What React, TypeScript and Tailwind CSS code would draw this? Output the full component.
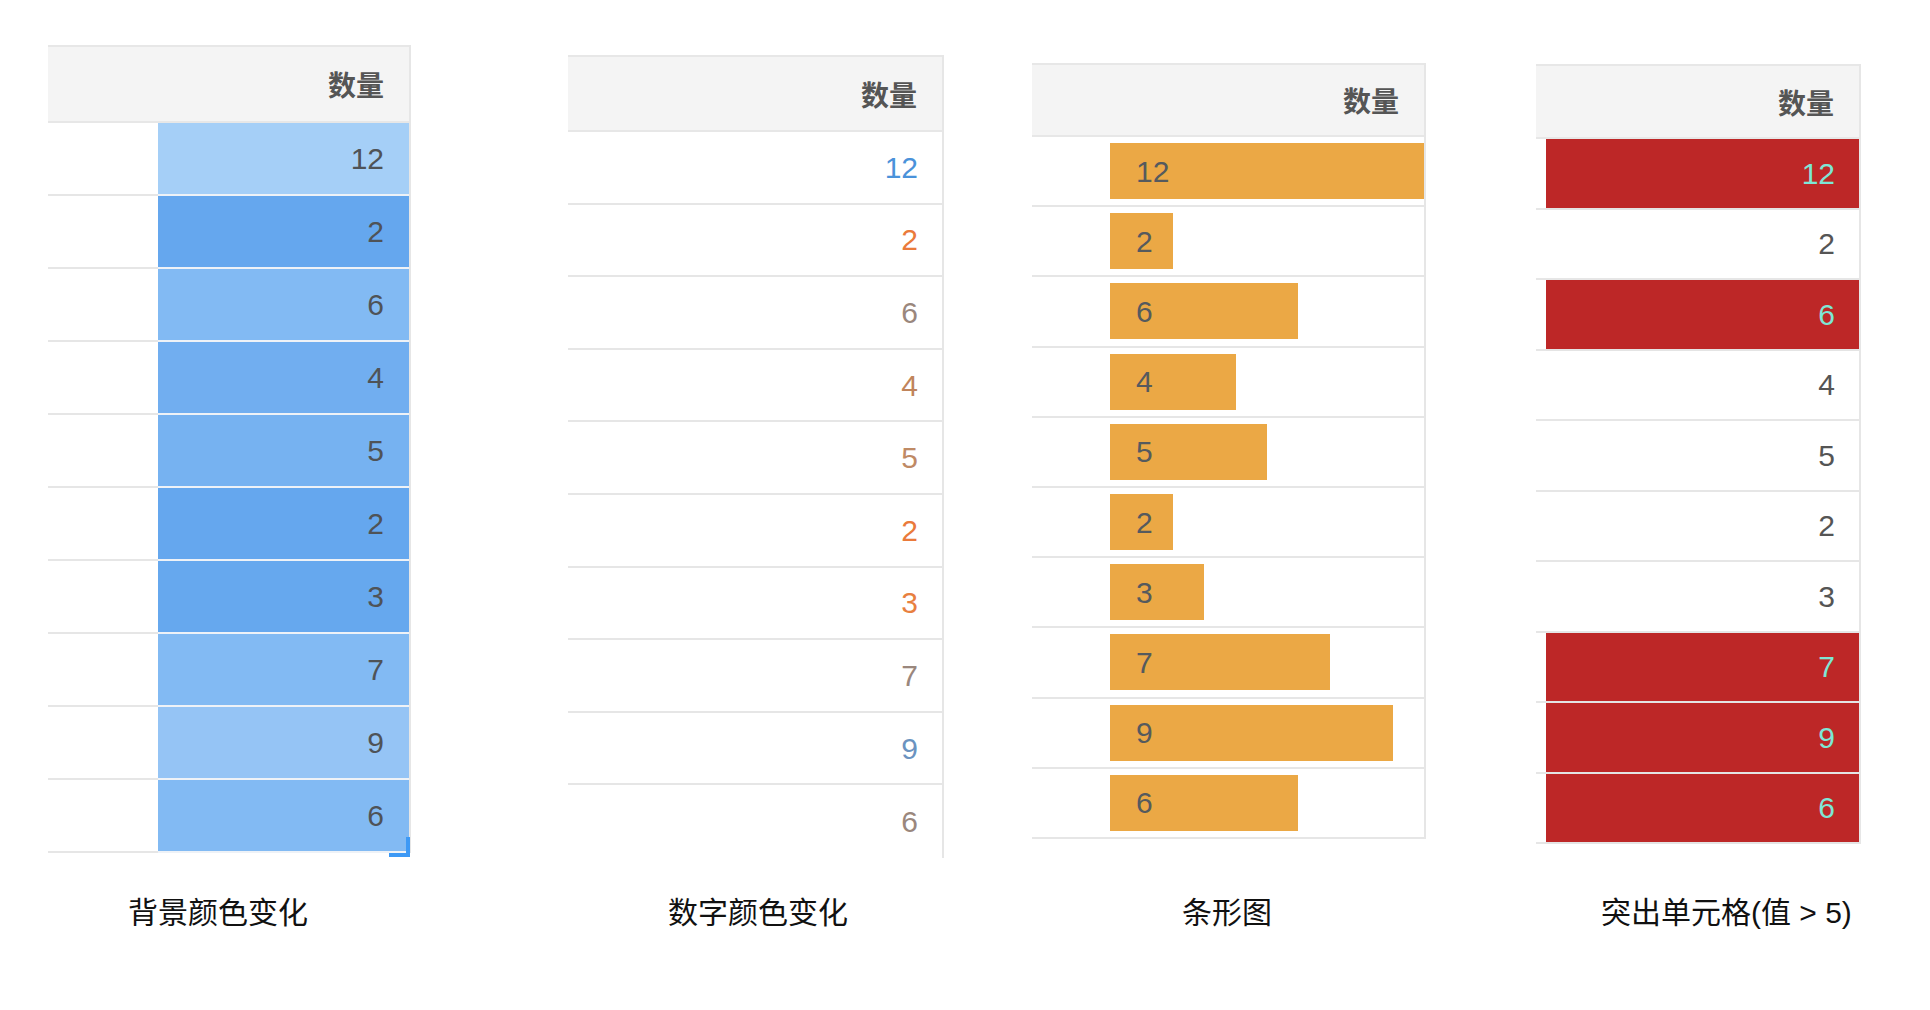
const values = [12, 2, 6, 4, 5, 2, 3, 7, 9, 6];

// colour scale for the first table (lower value = deeper blue)
const blueBg: Record<number, string> = {
  2: "bg-[#65a7ee]",
  3: "bg-[#66a8ee]",
  4: "bg-[#71aef0]",
  5: "bg-[#76b2f1]",
  6: "bg-[#82baf3]",
  7: "bg-[#82baf3]",
  9: "bg-[#95c4f5]",
  12: "bg-[#a5cff7]",
};

const textColors = [
  "text-[#4a92da]",
  "text-[#ea7a3b]",
  "text-[#9a877d]",
  "text-[#c0845b]",
  "text-[#bf8a65]",
  "text-[#ea7a3b]",
  "text-[#e8803f]",
  "text-[#9a877d]",
  "text-[#6b93c0]",
  "text-[#9a877d]",
];

const numFont = "font-['Liberation_Sans',Arial,sans-serif] text-[30px]";
const cjkFont = "font-['Noto_Sans_CJK_SC','Noto_Sans',sans-serif]";
const labelFont = "font-['Liberation_Sans','Noto_Sans_CJK_SC',sans-serif]";

function Header({ h }: { h: string }) {
  return (
    <div
      className={`${h} flex items-center justify-end pr-[25px] bg-[#f4f4f4] border-t-2 border-b-2 border-[#e7e7e7] ${cjkFont} font-bold text-[28px] text-[#555]`}
    >
      数量
    </div>
  );
}

function Label({ text, ml }: { text: string; ml: string }) {
  return (
    <div className={`${ml} h-[40px] leading-[40px] whitespace-nowrap ${labelFont} text-[30px] text-[#111]`}>
      {text}
    </div>
  );
}

function BackgroundTable() {
  return (
    <div className="relative w-[363px] border-r-2 border-[#e6e6e6]">
      <Header h="h-[78px]" />
      {values.map((v, i) => (
        <div key={i} className="flex h-[73px]">
          <div className="w-[110px] border-b-2 border-[#e6e6e6]" />
          <div
            className={`flex-1 flex items-center justify-end pr-[25px] border-b-2 border-[#eef2f7] ${blueBg[v]} ${numFont} text-[#4f5357]`}
          >
            {v}
          </div>
        </div>
      ))}
      <div className="absolute right-[-1px] bottom-[-4px] w-[4px] h-[20px] bg-[#3d99f5]" />
      <div className="absolute right-[-1px] bottom-[-4px] w-[21px] h-[4px] bg-[#3d99f5]" />
    </div>
  );
}

function TextColorTable() {
  return (
    <div className="w-[376px] border-r-2 border-[#e6e6e6]">
      <Header h="h-[77px]" />
      {values.map((v, i) => (
        <div
          key={i}
          className={`flex h-[72.6px] items-center justify-end pr-[24px] ${
            i < values.length - 1 ? "border-b-2 border-[#e6e6e6]" : ""
          } ${numFont} ${textColors[i]}`}
        >
          {v}
        </div>
      ))}
    </div>
  );
}

function BarTable() {
  return (
    <div className="w-[394px] border-r-2 border-[#e6e6e6]">
      <Header h="h-[74px]" />
      {values.map((v, i) => (
        <div key={i} className="flex h-[70.2px] items-center pl-[78px] border-b-2 border-[#e6e6e6] overflow-hidden">
          <div
            className={`h-[56px] shrink-0 flex items-center pl-[26px] bg-[#eba845] ${numFont} text-[#555a5e]`}
            style={{ width: Math.min(Math.round(v * 31.4), 314) }}
          >
            {v}
          </div>
        </div>
      ))}
    </div>
  );
}

function HighlightTable() {
  return (
    <div className="w-[325px] border-r-2 border-[#e6e6e6]">
      <Header h="h-[75px]" />
      {values.map((v, i) => (
        <div key={i} className="flex h-[70.5px]">
          <div className="w-[10px] border-b-2 border-[#e6e6e6]" />
          <div
            className={`flex-1 flex items-center justify-end pr-[24px] border-b-2 ${
              v > 5 ? "bg-[#bd2727] text-[#7ee6d5] border-[#e4e4e4]" : "bg-white text-[#555] border-[#e6e6e6]"
            } ${numFont}`}
          >
            {v}
          </div>
        </div>
      ))}
    </div>
  );
}

export default function App() {
  return (
    <div className="w-[1930px] h-[1010px] bg-white flex pl-[48px]">
      <div className="flex flex-col">
        <div className="h-[893px] pt-[45px]">
          <BackgroundTable />
        </div>
        <Label text="背景颜色变化" ml="ml-[80px]" />
      </div>
      <div className="flex flex-col ml-[157px]">
        <div className="h-[893px] pt-[55px]">
          <TextColorTable />
        </div>
        <Label text="数字颜色变化" ml="ml-[100px]" />
      </div>
      <div className="flex flex-col ml-[88px]">
        <div className="h-[893px] pt-[63px]">
          <BarTable />
        </div>
        <Label text="条形图" ml="ml-[150px]" />
      </div>
      <div className="flex flex-col ml-[110px]">
        <div className="h-[893px] pt-[64px]">
          <HighlightTable />
        </div>
        <Label text="突出单元格(值 > 5)" ml="ml-[65px]" />
      </div>
    </div>
  );
}
